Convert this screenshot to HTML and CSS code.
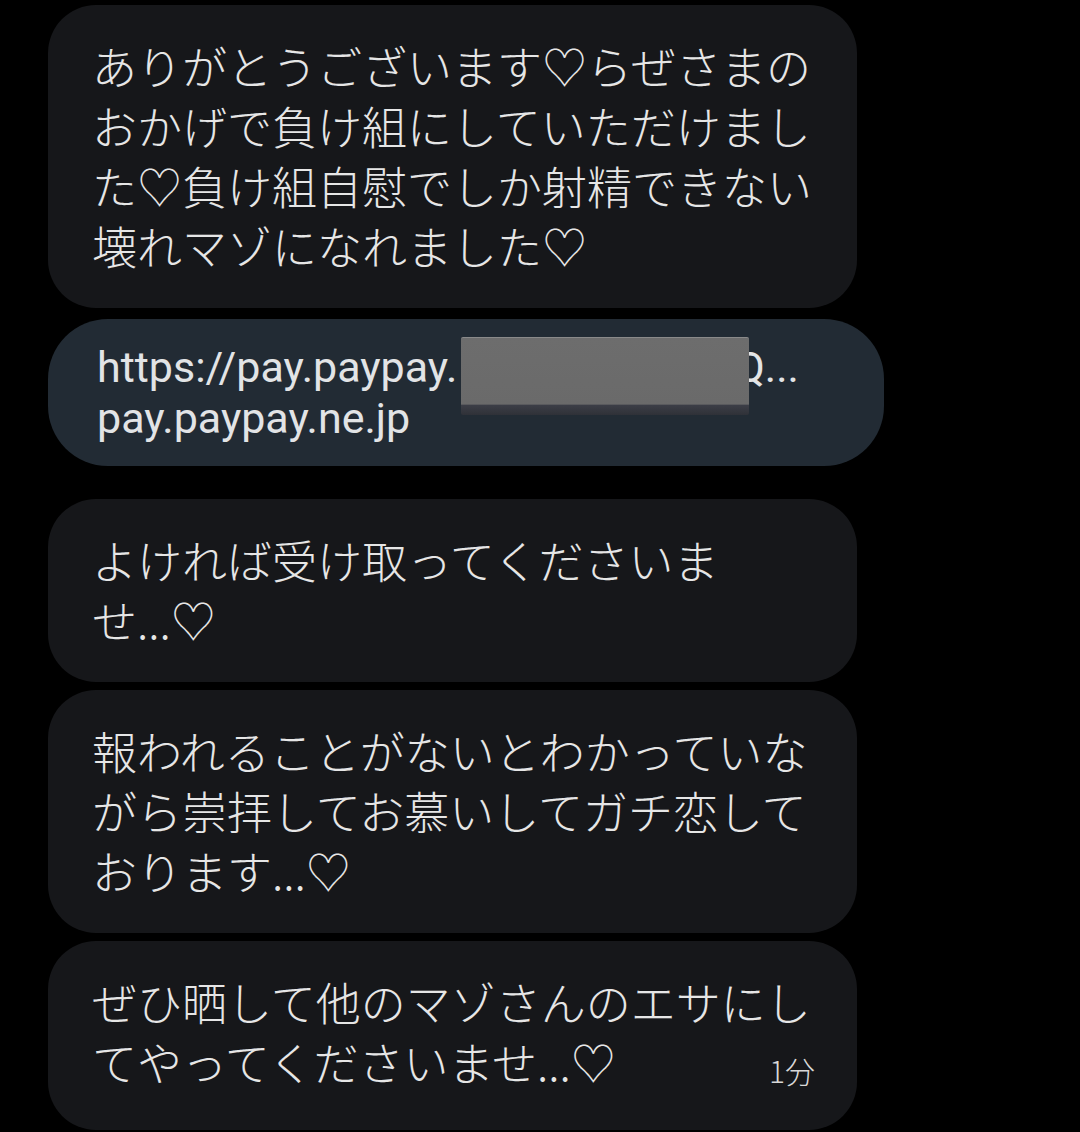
FILE: index.html
```html
<!DOCTYPE html>
<html lang="ja">
  <head>
    <meta charset="UTF-8" />
    <meta name="viewport" content="width=device-width, initial-scale=1.0" />
    <title>メッセージ</title>
    <link rel="stylesheet" href="styles.css">
  </head>
  <body>
    <div class="thread">
      <div class="bubble">
        ありがとうございます♡らぜさまの<br>おかげで負け組にしていただけまし<br>た♡負け組自慰でしか射精できない<br>壊れマゾになれました♡
      </div>

      <div class="bubble link">
        <div class="url">https://pay.paypay.<span class="redact"></span>Q...</div>
        <div class="domain">pay.paypay.ne.jp</div>
      </div>

      <div class="bubble spaced">
        よければ受け取ってくださいま<br>せ...♡
      </div>

      <div class="bubble">
        報われることがないとわかっていな<br>がら崇拝してお慕いしてガチ恋して<br>おります...♡
      </div>

      <div class="bubble">
        ぜひ晒して他のマゾさんのエサにし
        <div class="last-line">
          <span>てやってくださいませ...♡</span>
          <span class="time">1分</span>
        </div>
      </div>
    </div>
  </body>
</html>
```

FILE: styles.css
```css
body {
  margin: 0;
  padding: 0;
  background-color: #000;
  font-family: "Noto Sans CJK JP", "Noto Sans", sans-serif;
  color: #e6e6e6;
}
.thread {
  display: flex;
  flex-direction: column;
  align-items: flex-start;
  gap: 8px;
  padding: 5px 0 0 48px;
}
.bubble {
  box-sizing: border-box;
  width: 809px;
  padding: 31px 36px 32px 44px;
  border-radius: 48px;
  background-color: #16171a;
  font-size: 45px;
  font-weight: 300;
  line-height: 60px;
  white-space: nowrap;
}
.bubble.link {
  width: 836px;
  margin-top: 3px;
  padding: 23px 40px 22px 49px;
  border-radius: 60px;
  background-color: #222b34;
  font-family: Roboto, "Liberation Sans", sans-serif;
  font-size: 43px;
  font-weight: 400;
  line-height: 51px;
  color: #e2e4e6;
}
.bubble.spaced {
  margin-top: 25px;
}
.redact {
  position: relative;
  z-index: 1;
  display: inline-block;
  width: 288px;
  height: 10px;
  margin-left: 4px;
  margin-right: -14px;
}
.redact::after {
  content: "";
  position: absolute;
  left: 0;
  right: 0;
  top: -35px;
  height: 78px;
  box-sizing: border-box;
  border-top: 1px solid #8a8a8a;
  border-radius: 2px;
  background: linear-gradient(to bottom, #6d6d6d 0, #6a6a6a 86%, #3c3e47 87%, #2f3138 100%);
}
.last-line {
  display: flex;
  justify-content: space-between;
  align-items: baseline;
  padding-right: 6px;
}
.time {
  font-size: 30px;
  color: #d8d8d8;
  position: relative;
  top: 2px;
}
```
